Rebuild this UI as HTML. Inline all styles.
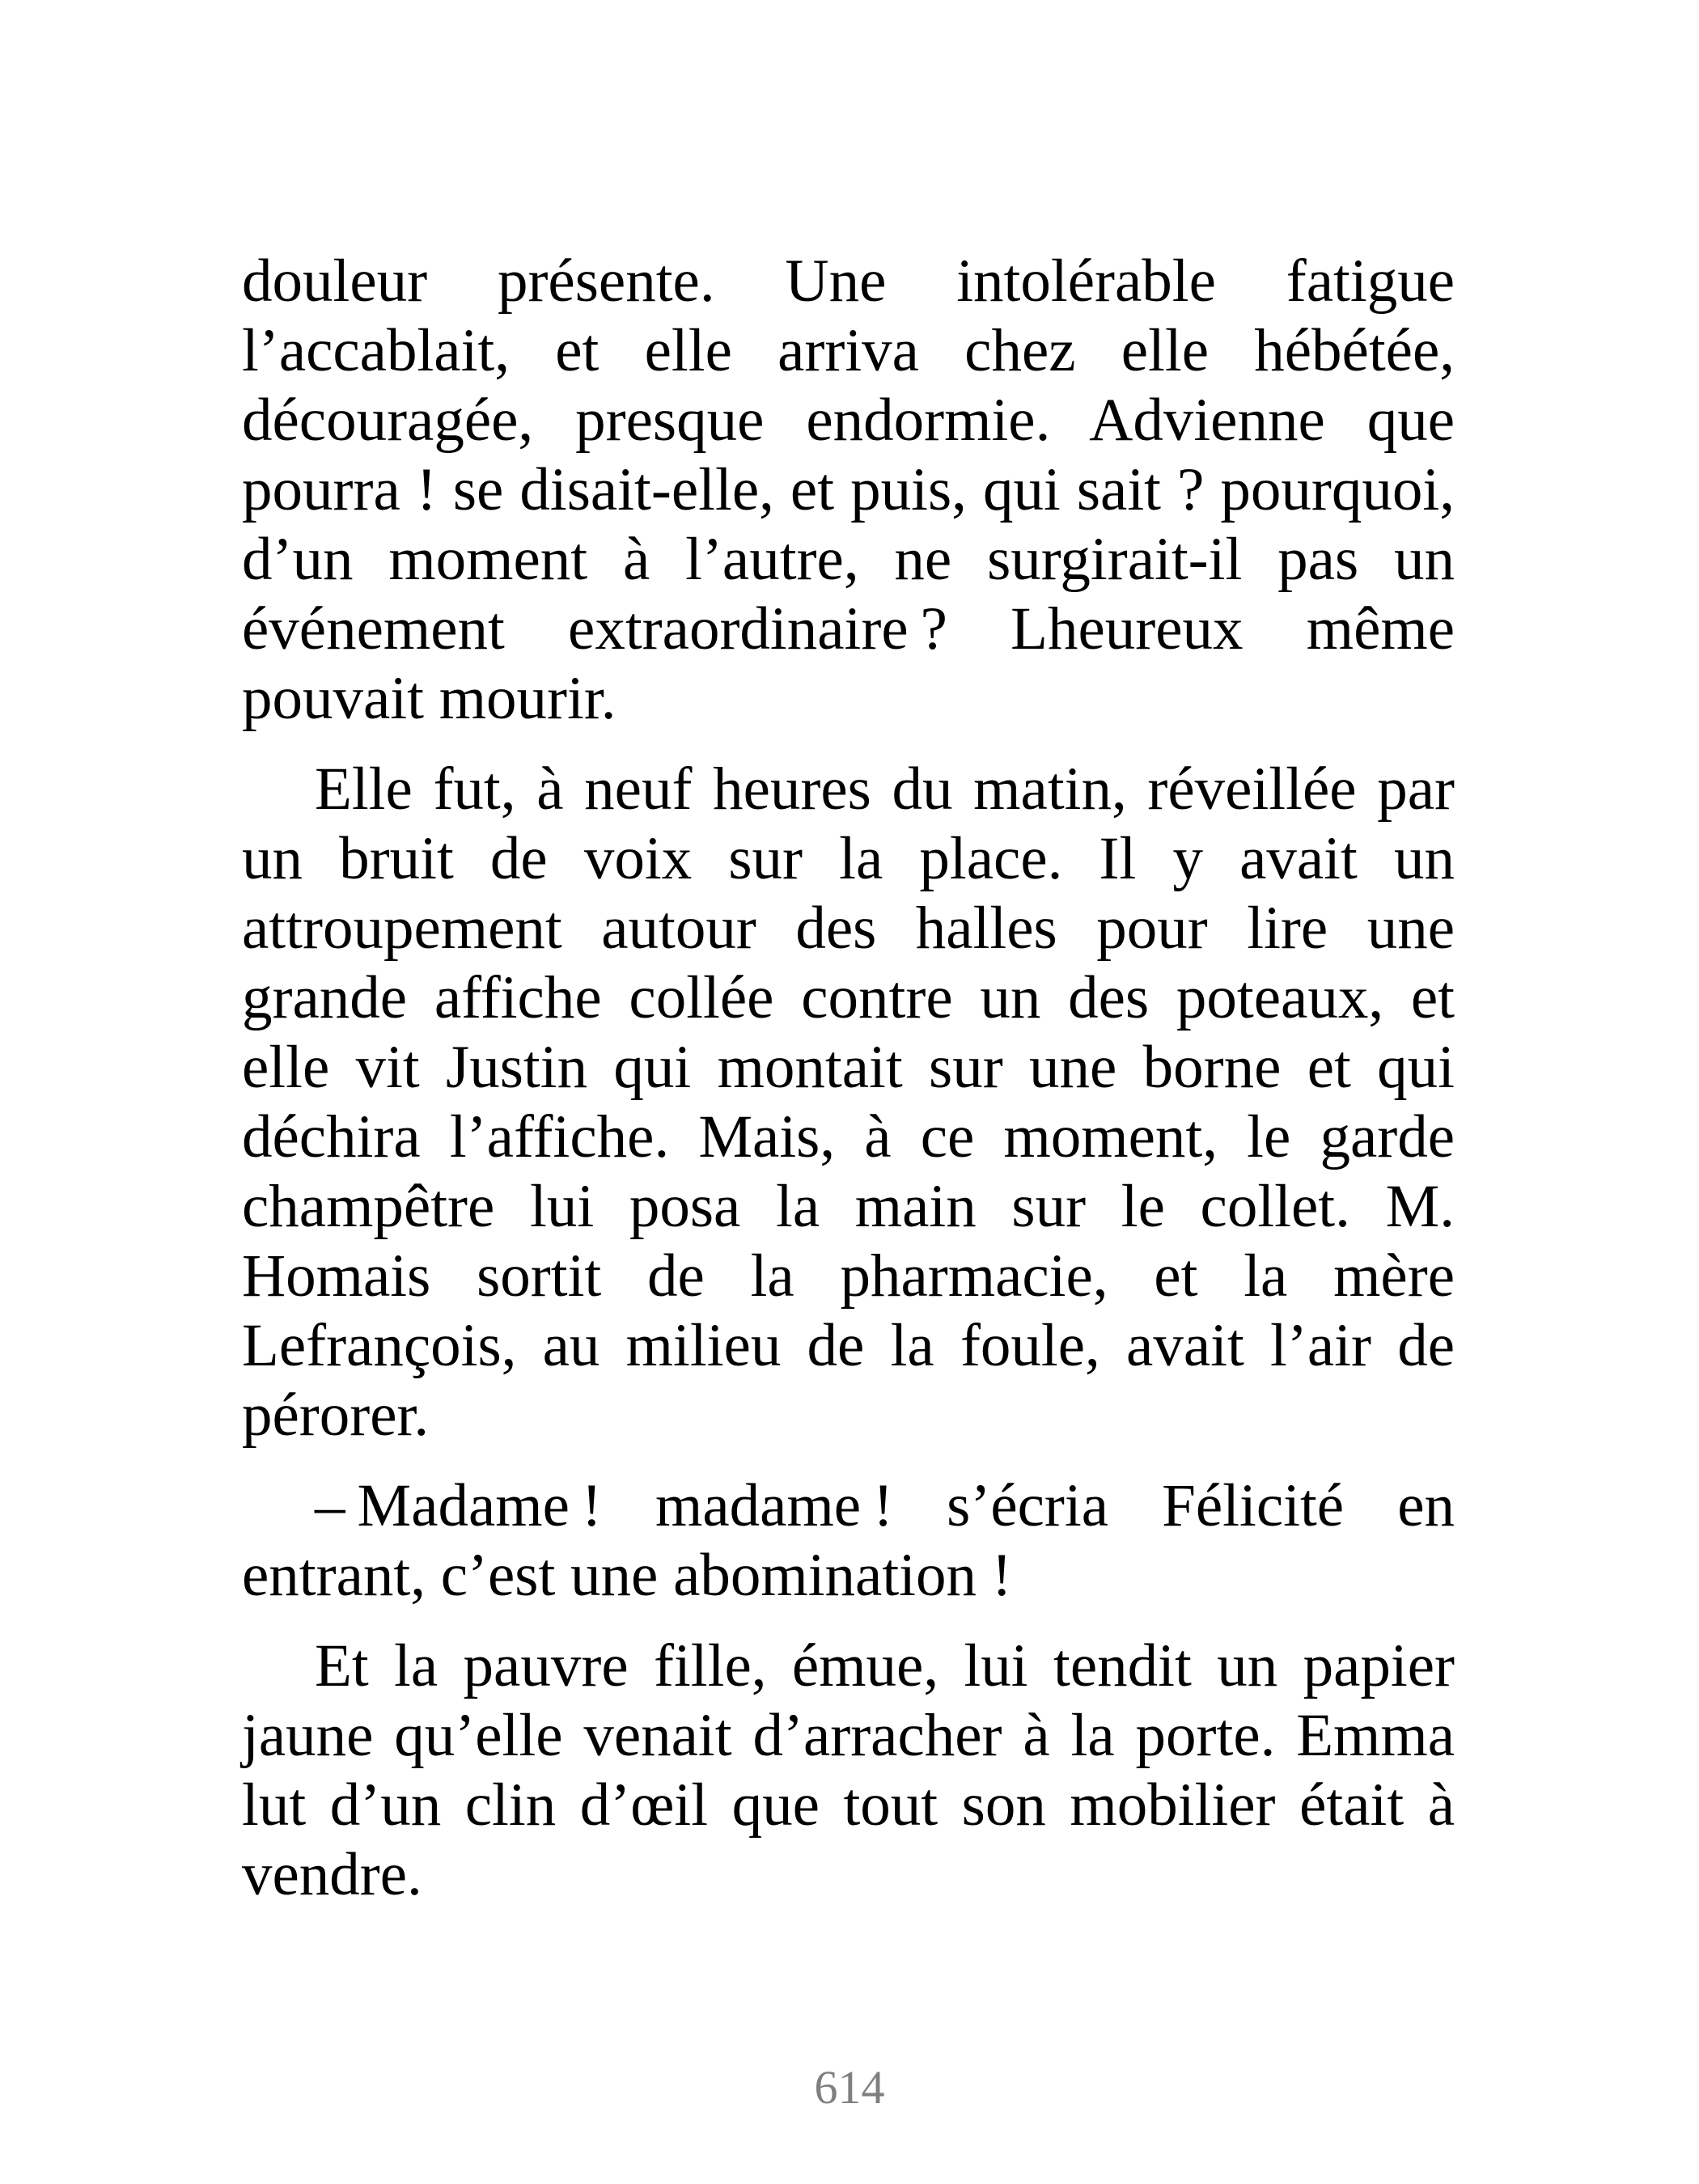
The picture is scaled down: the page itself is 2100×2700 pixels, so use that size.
<!DOCTYPE html>
<html><head><meta charset="utf-8"><style>
html,body{margin:0;padding:0;background:#fff;}
body{width:2100px;height:2700px;position:relative;overflow:hidden;font-family:"Liberation Serif",serif;font-size:75px;color:#000;}
.l{position:absolute;left:299px;width:1499px;line-height:86px;height:86px;white-space:nowrap;text-align:justify;text-align-last:justify;}
.e{text-align:left;text-align-last:left;}
.i{left:389px;width:1409px;}
.pn{position:absolute;left:0;width:2100px;text-align:center;top:2546px;font-size:58px;line-height:70px;color:#7f7f7f;}
</style></head><body>
<div class="l" style="top:305px">douleur présente. Une intolérable fatigue</div>
<div class="l" style="top:391px">l’accablait, et elle arriva chez elle hébétée,</div>
<div class="l" style="top:477px">découragée, presque endormie. Advienne que</div>
<div class="l" style="top:563px">pourra ! se disait-elle, et puis, qui sait ? pourquoi,</div>
<div class="l" style="top:649px">d’un moment à l’autre, ne surgirait-il pas un</div>
<div class="l" style="top:735px">événement extraordinaire&#8239;? Lheureux même</div>
<div class="l e" style="top:821px">pouvait mourir.</div>

<div class="l i" style="top:933px">Elle fut, à neuf heures du matin, réveillée par</div>
<div class="l" style="top:1019px">un bruit de voix sur la place. Il y avait un</div>
<div class="l" style="top:1105px">attroupement autour des halles pour lire une</div>
<div class="l" style="top:1191px">grande affiche collée contre un des poteaux, et</div>
<div class="l" style="top:1277px">elle vit Justin qui montait sur une borne et qui</div>
<div class="l" style="top:1363px">déchira l’affiche. Mais, à ce moment, le garde</div>
<div class="l" style="top:1449px">champêtre lui posa la main sur le collet. M.</div>
<div class="l" style="top:1535px">Homais sortit de la pharmacie, et la mère</div>
<div class="l" style="top:1621px">Lefrançois, au milieu de la foule, avait l’air de</div>
<div class="l e" style="top:1707px">pérorer.</div>

<div class="l i" style="top:1819px">–&#8239;Madame&#8239;! madame&#8239;! s’écria Félicité en</div>
<div class="l e" style="top:1905px">entrant, c’est une abomination !</div>

<div class="l i" style="top:2017px">Et la pauvre fille, émue, lui tendit un papier</div>
<div class="l" style="top:2103px">jaune qu’elle venait d’arracher à la porte. Emma</div>
<div class="l" style="top:2189px">lut d’un clin d’œil que tout son mobilier était à</div>
<div class="l e" style="top:2275px">vendre.</div>

<div class="pn">614</div>
</body></html>
